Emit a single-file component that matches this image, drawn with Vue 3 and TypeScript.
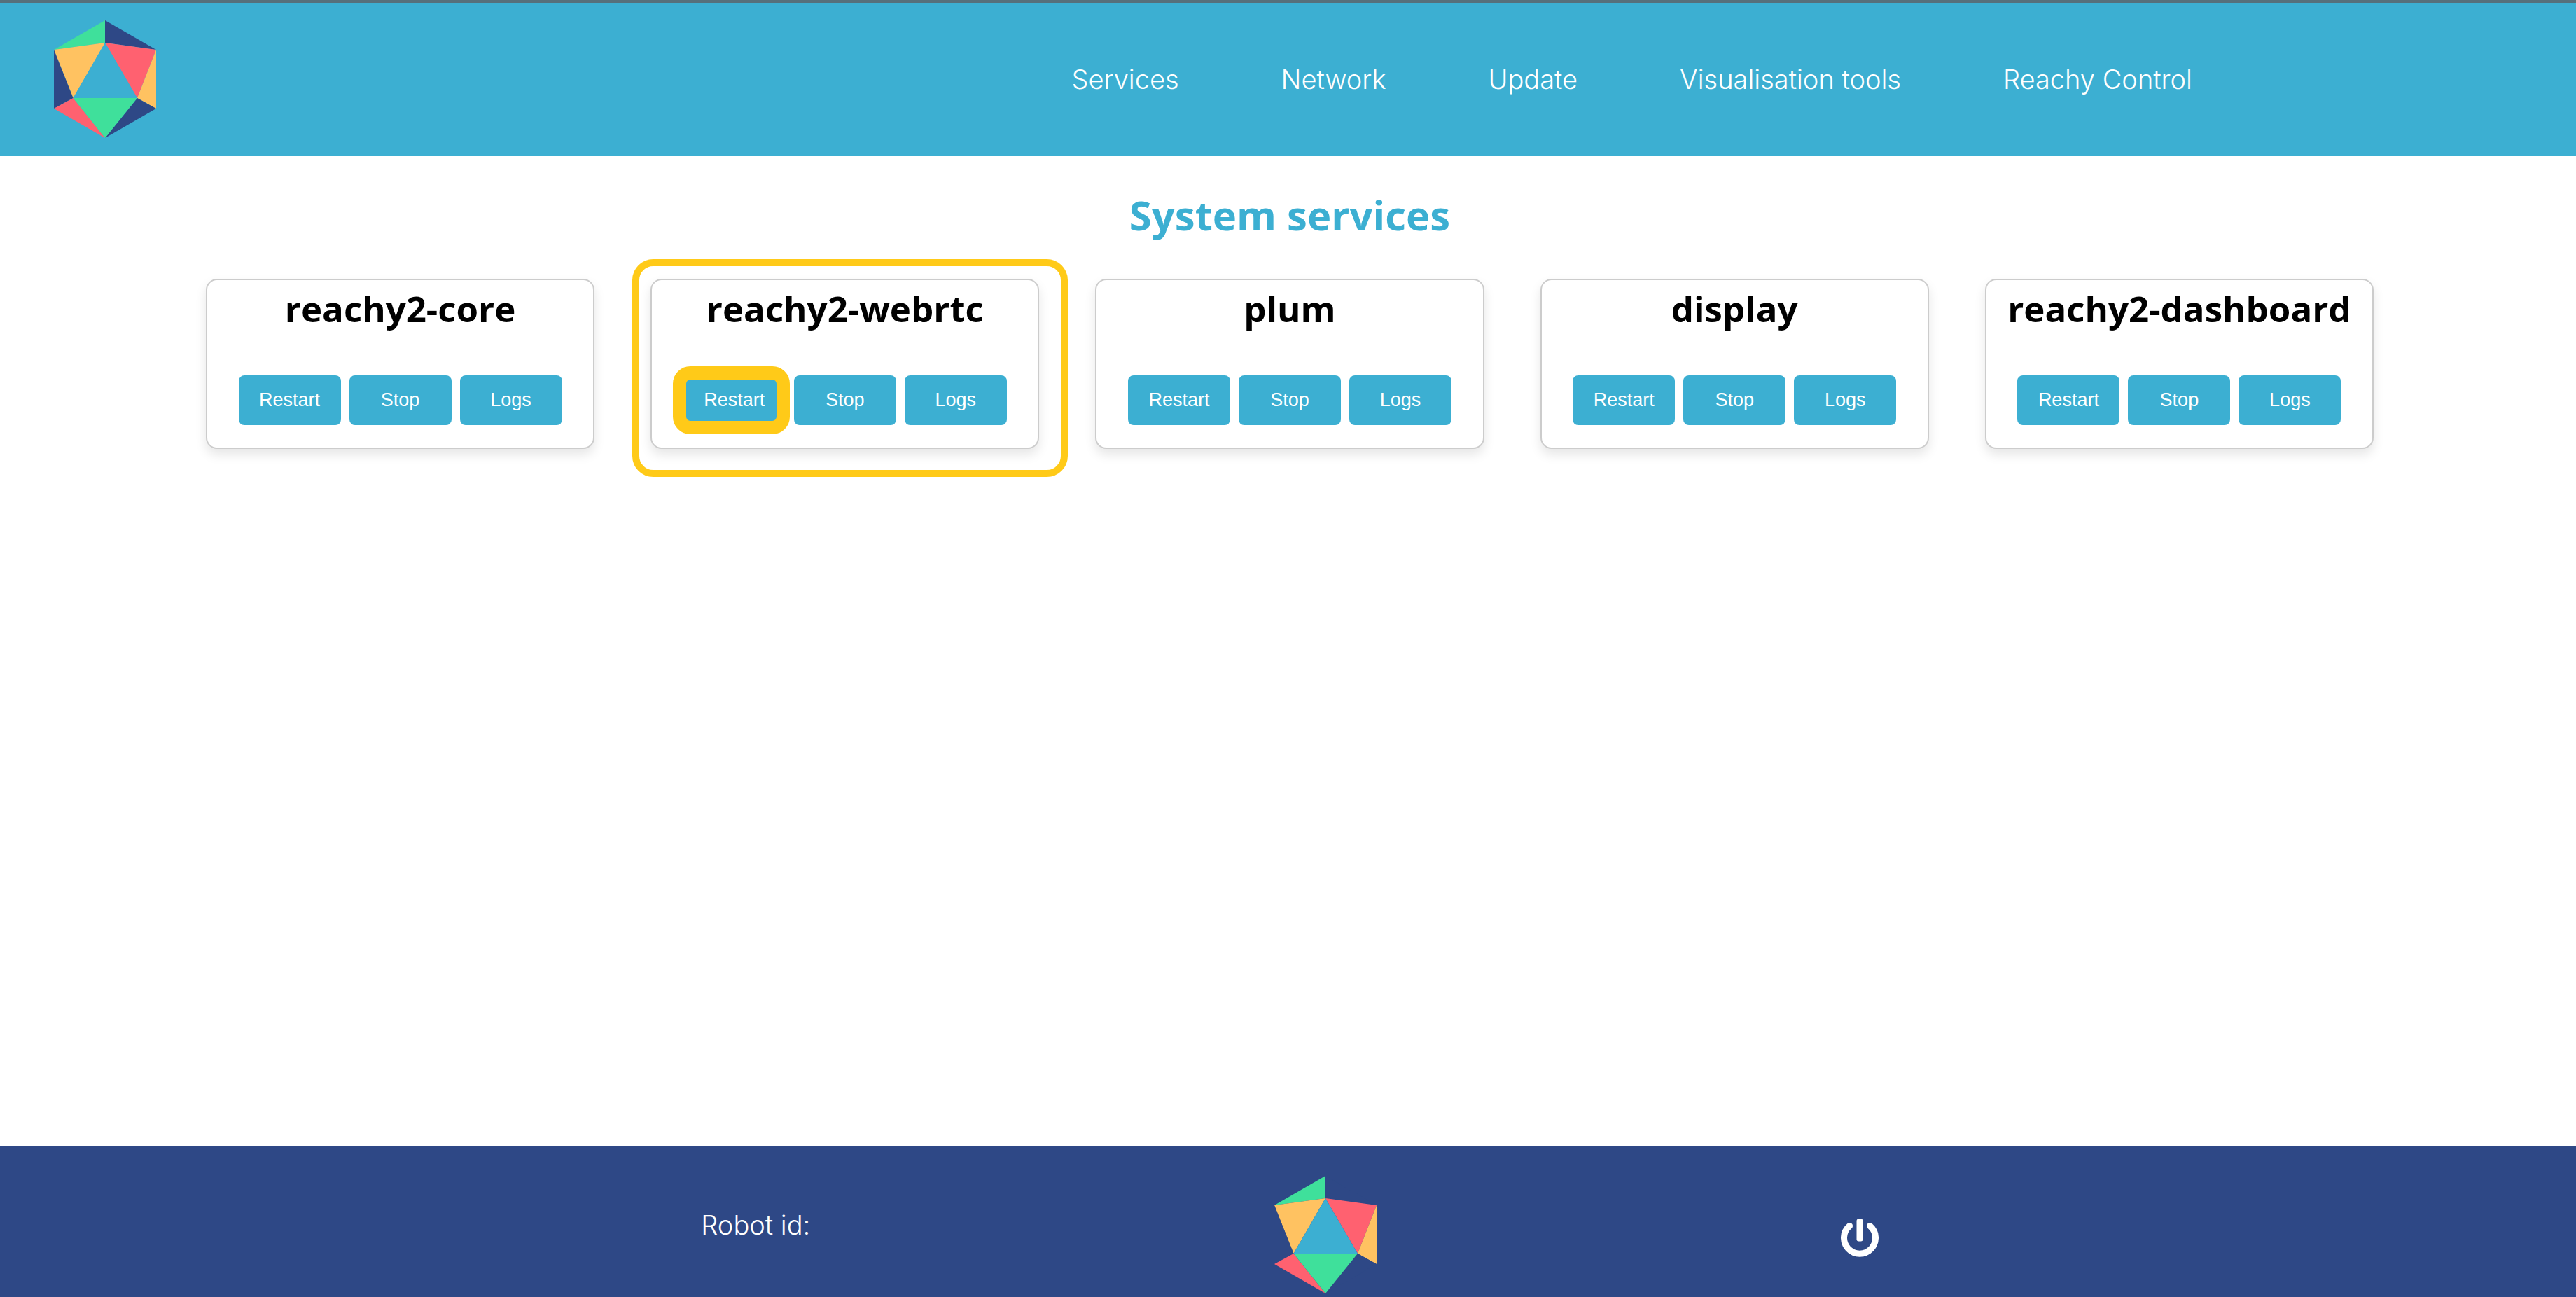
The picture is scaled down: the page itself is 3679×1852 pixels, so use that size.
<script setup lang="ts">
interface Facet {
  points: string
  fill: string
}

interface Service {
  name: string
  highlighted: boolean
}

const links: string[] = ['Services', 'Network', 'Update', 'Visualisation tools', 'Reachy Control']

const actions: string[] = ['Restart', 'Stop', 'Logs']

const services: Service[] = [
  { name: 'reachy2-core', highlighted: false },
  { name: 'reachy2-webrtc', highlighted: true },
  { name: 'plum', highlighted: false },
  { name: 'display', highlighted: false },
  { name: 'reachy2-dashboard', highlighted: false },
]

// Facets of the icosahedron logo
const facets: Facet[] = [
  { points: '73,0 0,42 73,32', fill: '#3fe09b' },
  { points: '73,0 146,42 73,32', fill: '#2e4886' },
  { points: '0,42 73,32 27.5,111', fill: '#ffc261' },
  { points: '146,42 73,32 119,111', fill: '#ff6170' },
  { points: '0,42 27.5,111 0,126', fill: '#2e4886' },
  { points: '146,42 119,111 146,126', fill: '#ffc261' },
  { points: '0,126 27.5,111 73,168', fill: '#ff6170' },
  { points: '146,126 119,111 73,168', fill: '#2e4886' },
  { points: '27.5,111 119,111 73,168', fill: '#3fe09b' },
  { points: '73,32 119,111 27.5,111', fill: '#3cafd2' },
]
</script>

<template>
  <div class="page">
    <header class="header">
      <a href="#" class="logo-link" aria-label="Home">
        <svg class="logo" viewBox="0 0 146 168" aria-hidden="true">
          <polygon v-for="f in facets" :key="f.points" :points="f.points" :fill="f.fill" />
        </svg>
      </a>
      <nav class="nav">
        <a v-for="link in links" :key="link" href="#" class="nav-link">{{ link }}</a>
      </nav>
    </header>

    <main class="main">
      <h1 class="title">System services</h1>
      <div class="cards">
        <section v-for="s in services" :key="s.name" class="card" :class="{ highlighted: s.highlighted }">
          <h2 class="card-title">{{ s.name }}</h2>
          <div class="actions">
            <button v-for="a in actions" :key="a" type="button" class="action">{{ a }}</button>
          </div>
        </section>
      </div>
    </main>

    <footer class="footer">
      <p class="robot">Robot id:</p>
      <svg class="logo" viewBox="0 0 146 168" aria-hidden="true">
        <polygon v-for="f in facets" :key="f.points" :points="f.points" :fill="f.fill" />
      </svg>
      <button type="button" class="power" aria-label="Power">
        <svg viewBox="0 0 56 56" width="56" height="56" fill="none" stroke="#fff" stroke-linecap="round">
          <path d="M13.5 10.5 A22.5 22.5 0 1 0 42.5 10.5" stroke-width="9" />
          <rect x="23.5" y="0.5" width="9" height="32" rx="3" fill="#fff" stroke="none" />
        </svg>
      </button>
    </footer>
  </div>
</template>

<style>
body {
  margin: 0;
  background: #fff;
}
</style>

<style scoped>
.page {
  display: flex;
  flex-direction: column;
  min-height: 100vh;
  font-family: Inter, 'Open Sans', sans-serif;
}

.header {
  display: flex;
  align-items: center;
  justify-content: space-between;
  box-sizing: border-box;
  padding: 25px 548px 26px 77px;
  border-top: 4px solid #56707b;
  background: #3cafd2;
}

.logo-link {
  display: flex;
}

.logo {
  display: block;
  width: 146px;
  height: 168px;
}

.nav {
  display: flex;
  gap: 146px;
}

.nav-link {
  color: #fff;
  font-size: 38px;
  font-weight: 300;
  line-height: 44px;
  text-decoration: none;
  white-space: nowrap;
}

.main {
  flex: 1;
  padding: 44px 289px 0 294px;
}

.title {
  margin: 0;
  color: #3cafd2;
  font-family: 'Open Sans', sans-serif;
  font-size: 58px;
  font-weight: 700;
  line-height: 80px;
  text-align: center;
}

.cards {
  display: grid;
  grid-template-columns: repeat(5, 1fr);
  gap: 80px;
  margin-top: 51px;
}

.card {
  position: relative;
  box-sizing: border-box;
  min-width: 0;
  padding: 6px 0 32px;
  border: 2px solid #ccc;
  border-radius: 16px;
  background: #fff;
  box-shadow: 0 8px 16px rgba(0, 0, 0, 0.1);
}

.card-title {
  margin: 0;
  color: #000;
  font-family: 'Open Sans', sans-serif;
  font-size: 51px;
  font-weight: 700;
  line-height: 68px;
  text-align: center;
  white-space: nowrap;
}

.actions {
  display: flex;
  justify-content: center;
  gap: 12px;
  margin-top: 62px;
}

.action {
  position: relative;
  width: 146px;
  height: 71px;
  padding: 0;
  border: 0;
  border-radius: 8px;
  background: #3cafd2;
  color: #fff;
  font-family: 'Liberation Sans', Arial, sans-serif;
  font-size: 27px;
}

/* Attention rings around the highlighted service and its restart button */
.highlighted::after,
.highlighted .action:first-child::after {
  content: '';
  position: absolute;
  border-style: solid;
  border-color: #ffca18;
  pointer-events: none;
}

.highlighted::after {
  inset: -30px -43px -42px -28px;
  border-width: 10px;
  border-radius: 30px;
}

.highlighted .action:first-child::after {
  inset: -13px -6px -13px -15px;
  border-width: 19px;
  border-radius: 25px;
}

.footer {
  display: flex;
  align-items: center;
  justify-content: center;
  gap: 18vw;
  padding: 42px 0 5px 6px;
  background: #2e4886;
}

.robot {
  margin: 0 0 28px;
  color: #fff;
  font-size: 38px;
  font-weight: 300;
  line-height: 44px;
  white-space: nowrap;
}

.power {
  display: flex;
  margin-top: 10px;
  padding: 0;
  border: 0;
  background: none;
}
</style>
